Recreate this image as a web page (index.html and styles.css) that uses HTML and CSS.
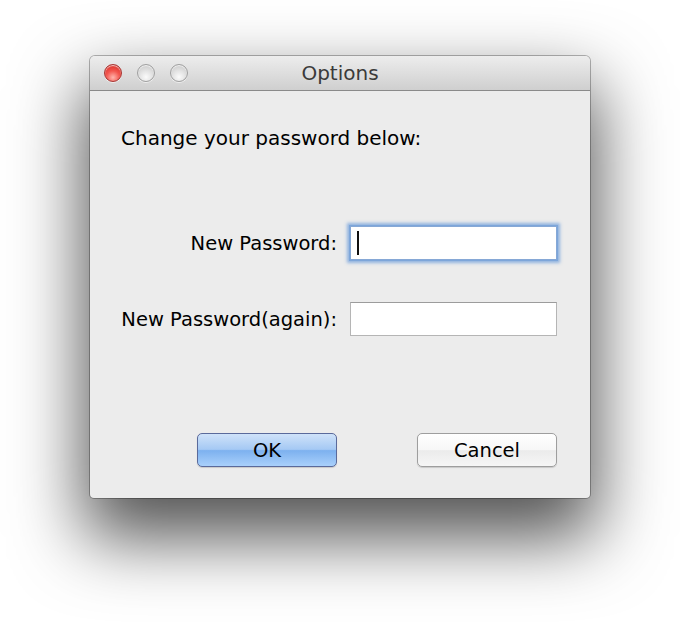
FILE: index.html
```html
<!DOCTYPE html>
<html lang="en">
<head>
    <meta charset="UTF-8">
    <meta name="viewport" content="width=device-width, initial-scale=1.0">
    <title>Options</title>
    <link rel="stylesheet" href="styles.css">
</head>
<body>

<div class="window">
    <div class="titlebar">
        <div class="lights">
            <span class="light close"></span>
            <span class="light"></span>
            <span class="light"></span>
        </div>
        <div class="title">Options</div>
        <div></div>
    </div>
    <div class="content">
        <p class="intro">Change your password below:</p>
        <form class="fields">
            <label for="pw1">New Password:</label>
            <div class="field focused">
                <input type="password" id="pw1" name="pw1">
                <span class="caret"></span>
            </div>
            <label for="pw2">New Password(again):</label>
            <div class="field">
                <input type="password" id="pw2" name="pw2">
            </div>
        </form>
        <div class="buttons">
            <button type="button" class="btn default">OK</button>
            <button type="button" class="btn">Cancel</button>
        </div>
    </div>
</div>

</body>
</html>
```

FILE: styles.css
```css
html, body {
    height: 100%;
}
body {
    margin: 0;
    padding: 56px 0 0 90px;
    box-sizing: border-box;
    overflow: hidden;
    background: #fff;
    font-family: "DejaVu Sans", "Liberation Sans", sans-serif;
    color: #000;
}
.window {
    width: 500px;
    background: #ececec;
    border-radius: 5px 5px 4px 4px;
    overflow: hidden;
    box-shadow: 0 0 0 1px rgba(0, 0, 0, 0.28), 0 34px 70px 6px rgba(0, 0, 0, 0.68);
}
.titlebar {
    height: 34px;
    display: grid;
    grid-template-columns: 1fr auto 1fr;
    align-items: center;
    background: linear-gradient(#ededed, #cfcfcf);
    border-bottom: 1px solid #8a8a8a;
}
.lights {
    display: flex;
    gap: 15px;
    padding-left: 14px;
}
.light {
    width: 16px;
    height: 16px;
    border-radius: 50%;
    border: 1px solid #a0a0a0;
    background: radial-gradient(circle at 50% 75%, #fbfbfb 0%, #e2e2e2 45%, #c2c2c2 100%);
    box-shadow: inset 0 1px 1px rgba(255, 255, 255, 0.8), 0 1px 0 rgba(255, 255, 255, 0.6);
}
.light.close {
    border-color: #a83431;
    background: radial-gradient(circle at 50% 78%, #ffb5ad 0%, #f3564e 45%, #cf231b 100%);
}
.title {
    font-size: 20px;
    color: #3a3a3a;
}
.content {
    padding: 35px 33px 31px 31px;
}
.intro {
    margin: 0;
    font-size: 20px;
    line-height: 24px;
}
.fields {
    display: grid;
    grid-template-columns: 216px 207px;
    column-gap: 13px;
    row-gap: 42px;
    align-items: center;
    margin: 76px 0 0;
}
.fields label {
    text-align: right;
    font-size: 19.5px;
    white-space: nowrap;
}
.field {
    position: relative;
}
.field input {
    display: block;
    width: 100%;
    height: 34px;
    box-sizing: border-box;
    margin: 0;
    border: 1px solid #b5b5b5;
    border-top-color: #9c9c9c;
    background: #fff;
    outline: none;
    font-size: 18px;
}
.field.focused input {
    border-color: #86a8d6;
    box-shadow: 0 0 0 1px #7da6da, 0 0 3px 3px rgba(104, 154, 218, 0.7);
}
.caret {
    position: absolute;
    left: 7px;
    top: 5px;
    width: 2px;
    height: 24px;
    background: #111;
}
.buttons {
    display: flex;
    justify-content: flex-end;
    gap: 80px;
    margin-top: 97px;
}
.btn {
    width: 140px;
    height: 34px;
    padding: 0;
    font-family: inherit;
    font-size: 19.5px;
    color: #000;
    border: 1px solid #9e9e9e;
    border-radius: 5px;
    background: linear-gradient(#ffffff, #f7f7f7 50%, #ebebeb 52%, #f6f6f6);
    box-shadow: 0 1px 1px rgba(0, 0, 0, 0.15);
}
.btn.default {
    border-color: #5a6a9b;
    background: linear-gradient(#cfe2f9, #a5c9f4 48%, #7db1ef 52%, #a9d0fb);
}
```
